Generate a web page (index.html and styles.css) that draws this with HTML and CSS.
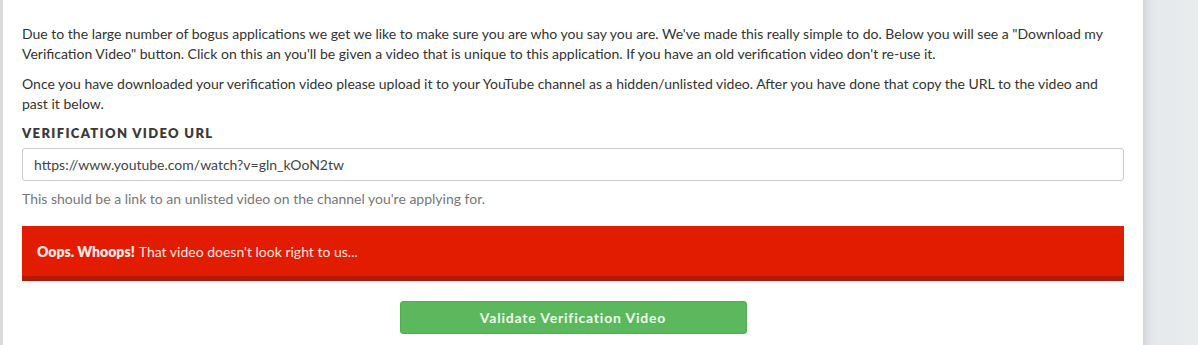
FILE: index.html
```html
<!DOCTYPE html>
<html>
<head>
<meta charset="utf-8">
<link rel="stylesheet" href="styles.css">
</head>
<body>
<div class="page">
  <div class="edge"></div>
  <main class="card">
    <p class="intro">Due to the large number of bogus applications we get we like to make sure you are who you say you are. We've made this really simple to do. Below you will see a "Download my Verification Video" button. Click on this an you'll be given a video that is unique to this application. If you have an old verification video don't re-use it.</p>
    <p class="intro">Once you have downloaded your verification video please upload it to your YouTube channel as a hidden/unlisted video. After you have done that copy the URL to the video and past it below.</p>
    <label class="label" for="url">VERIFICATION VIDEO URL</label>
    <input class="input" id="url" type="text" value="https://www.youtube.com/watch?v=gln_kOoN2tw">
    <p class="help">This should be a link to an unlisted video on the channel you're applying for.</p>
    <div class="alert"><strong>Oops. Whoops!</strong> That video doesn't look right to us...</div>
    <div class="actions"><button class="btn">Validate Verification Video</button></div>
  </main>
  <aside class="side"></aside>
</div>
</body>
</html>
```
FILE: styles.css
```css
html, body {
  margin: 0;
  padding: 0;
  height: 100%;
}
body {
  font-family: "Lato", "Liberation Sans", sans-serif;
  font-size: 14px;
  color: #333;
  background: #fff;
}
.page {
  display: flex;
  height: 345px;
  overflow: hidden;
}
.edge {
  width: 3px;
  background: #d9d9d9;
}
.card {
  width: 1102px;
  padding: 24px 19px 0 19px;
  background: #fff;
}
.intro {
  margin: 0 0 10px;
  line-height: 20px;
}
.label {
  display: block;
  margin-top: 10px;
  font-weight: 800;
  font-size: 13px;
  letter-spacing: 1.35px;
  color: #3a3a3a;
  line-height: 18px;
}
.input {
  display: block;
  box-sizing: border-box;
  width: 100%;
  height: 33px;
  margin-top: 6px;
  padding: 0 11px;
  border: 1px solid #ccc;
  border-radius: 3px;
  font-family: inherit;
  font-size: 14px;
  color: #444;
}
.help {
  margin: 8px 0 0;
  line-height: 20px;
  color: #777;
  font-size: 14px;
}
.alert {
  margin-top: 17px;
  height: 50px;
  box-sizing: content-box;
  display: flex;
  align-items: center;
  padding: 0 15px;
  background: #e21c00;
  border-bottom: 5px solid #b31a05;
  color: #fde7e2;
  font-size: 14px;
}
.alert strong {
  font-weight: 800;
  margin-right: 4px;
}
.actions {
  display: flex;
  justify-content: center;
  margin-top: 20px;
}
.btn {
  width: 347px;
  height: 33px;
  background: #5cb85c;
  border: 1px solid #52ad52;
  border-radius: 3px;
  color: #eefbee;
  font-family: inherit;
  font-weight: 700;
  font-size: 14px;
  letter-spacing: 0.8px;
}
.side {
  flex: 1;
  background: linear-gradient(to right, #d4d7d9 0, #e6e9eb 10px, #e9eced 100%);
}
```
